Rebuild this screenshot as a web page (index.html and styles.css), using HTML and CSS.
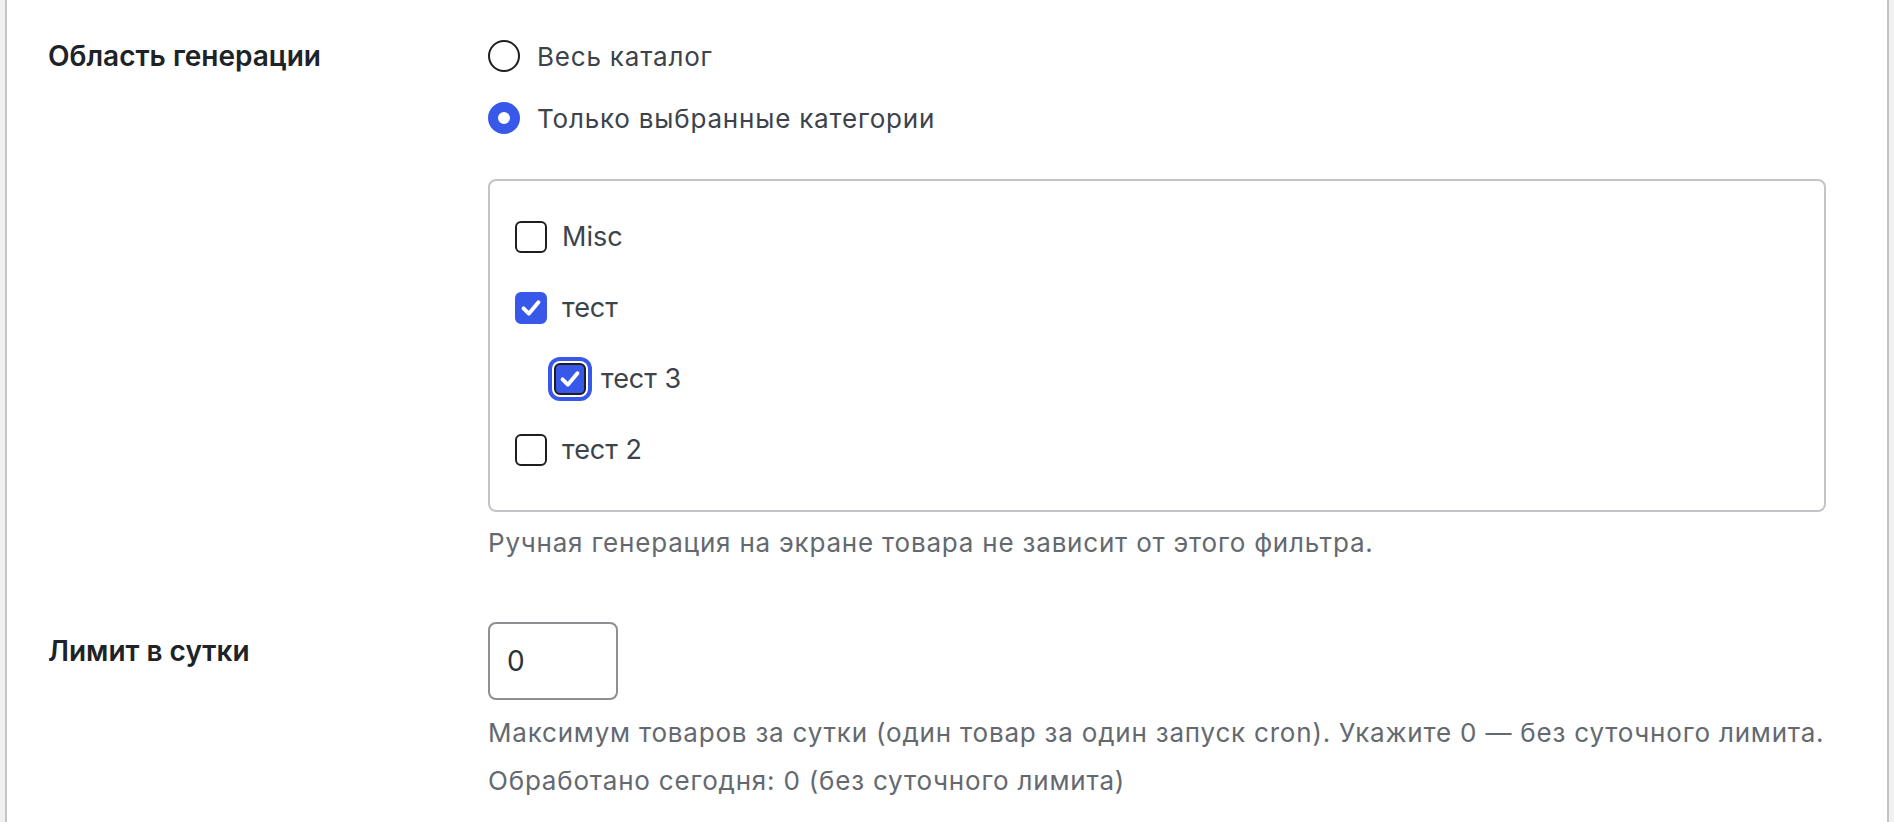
FILE: index.html
```html
<!DOCTYPE html>
<html lang="ru">

<head>
    <meta charset="UTF-8">
    <meta name="viewport" content="width=device-width, initial-scale=1.0">
    <title>Настройки генерации</title>

    <link rel="stylesheet" href="styles.css">
</head>

<body>
    <div class="card">

        <!-- Область генерации -->
        <div class="form-row row-scope">
            <div class="row-label">Область генерации</div>
            <div class="row-field">
                <label class="radio-line">
                    <span class="radio"></span>
                    Весь каталог
                </label>
                <label class="radio-line">
                    <span class="radio checked"></span>
                    Только выбранные категории
                </label>

                <div class="cat-box">
                    <label class="cat-line">
                        <span class="cb"></span>
                        Misc
                    </label>
                    <label class="cat-line">
                        <span class="cb checked">
                            <svg viewBox="0 0 32 32"><path d="M7.5 16.5l6 6L24.5 9.5"/></svg>
                        </span>
                        тест
                    </label>
                    <label class="cat-line child">
                        <span class="cb checked focus">
                            <svg viewBox="0 0 32 32"><path d="M7.5 16.5l6 6L24.5 9.5"/></svg>
                        </span>
                        тест 3
                    </label>
                    <label class="cat-line">
                        <span class="cb"></span>
                        тест 2
                    </label>
                </div>

                <p class="description first">Ручная генерация на экране товара не зависит от этого фильтра.</p>
            </div>
        </div>

        <!-- Лимит -->
        <div class="form-row row-limit">
            <div class="row-label">Лимит в сутки</div>
            <div class="row-field">
                <input class="small-text" type="number" value="0">
                <p class="description first">Максимум товаров за сутки (один товар за один запуск cron). Укажите 0 — без суточного лимита.</p>
                <p class="description">Обработано сегодня: 0 (без суточного лимита)</p>
            </div>
        </div>

    </div>
</body>

</html>
```

FILE: styles.css
```css
:root {
    --blue: #3858e9;
    --ink: #1d2327;
    --text: #3c434a;
    --muted: #646970;
    --line: #c3c4c7;
}

body {
    margin: 0;
    background: #f0f0f1;
    font-family: "Inter", "Noto Sans", sans-serif;
    color: var(--text);
}

.card {
    margin: 0 5px;
    min-height: 822px;
    background: #fff;
    border-left: 2px solid var(--line);
    border-right: 2px solid var(--line);
    padding-left: 41px;
    box-sizing: border-box;
}

.form-row {
    display: grid;
    grid-template-columns: 440px 1fr;
}

.row-scope {
    padding-top: 25px;
}

.row-limit {
    padding-top: 59px;
}

.row-label {
    font-size: 28px;
    line-height: 40px;
    font-weight: 600;
    color: var(--ink);
    margin-top: 11px;
}

.row-limit .row-label {
    margin-top: 9px;
}

/* radios */
.radio-line {
    display: flex;
    align-items: center;
    gap: 17px;
    height: 62px;
    font-size: 26px;
    letter-spacing: 0.8px;
}

.radio {
    width: 32px;
    height: 32px;
    border: 2px solid #1e1e1e;
    border-radius: 50%;
    box-sizing: border-box;
    flex: none;
}

.radio.checked {
    border: 10px solid var(--blue);
}

/* categorias */
.cat-box {
    width: 1338px;
    margin-top: 30px;
    border: 2px solid var(--line);
    border-radius: 8px;
    padding: 20px 25px 25px;
    box-sizing: border-box;
}

.cat-line {
    display: flex;
    align-items: center;
    gap: 15px;
    height: 71px;
    font-size: 27px;
}

.cat-line.child {
    padding-left: 39px;
}

.cb {
    width: 32px;
    height: 32px;
    border: 2px solid #1e1e1e;
    border-radius: 6px;
    box-sizing: border-box;
    flex: none;
    display: flex;
}

.cb.checked {
    background: var(--blue);
    border-color: var(--blue);
}

.cb.focus {
    border-color: #1e1e1e;
    box-shadow: 0 0 0 2px #fff, 0 0 0 6px var(--blue);
}

.cb svg {
    width: 100%;
    height: 100%;
    fill: none;
    stroke: #fff;
    stroke-width: 4.5;
    stroke-linecap: round;
    stroke-linejoin: round;
}

.description {
    margin: 8px 0 0;
    font-size: 26px;
    line-height: 40px;
    letter-spacing: 0.8px;
    color: var(--muted);
}

.row-scope .description.first {
    margin-top: 11px;
}

.row-limit .description.first {
    margin-top: 13px;
}

.small-text {
    display: block;
    width: 130px;
    height: 78px;
    margin: 0;
    border: 2px solid #8c8f94;
    border-radius: 8px;
    padding: 0 0 0 17px;
    box-sizing: border-box;
    font-family: inherit;
    font-size: 28px;
    color: #2c3338;
    -moz-appearance: textfield;
}

.small-text::-webkit-inner-spin-button {
    -webkit-appearance: none;
}
```
